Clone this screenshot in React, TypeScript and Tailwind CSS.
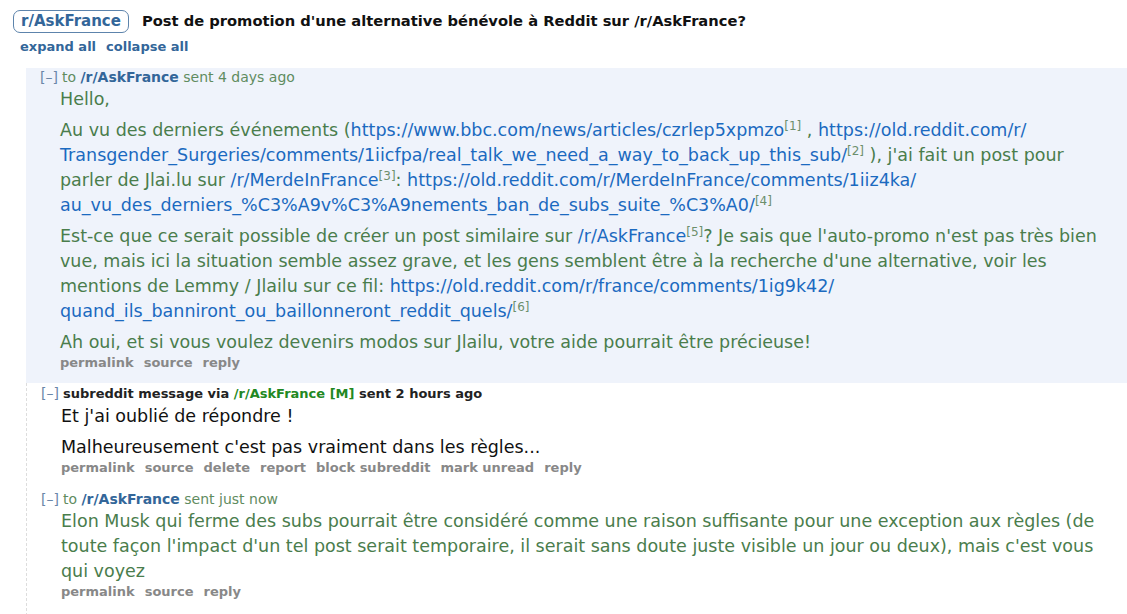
import React from "react";

const font = { fontFamily: '"DejaVu Sans", Verdana, sans-serif' };

function Ref({ n }: { n: number }) {
  return <span className="relative -top-[6px] text-[12px] leading-none text-[#6c8f6c]">[{n}]</span>;
}

function A({ children }: { children: React.ReactNode }) {
  return <a className="text-[#1b6ac0]">{children}</a>;
}

function Footer({ items }: { items: string[] }) {
  return (
    <ul className="flex gap-[10px] pl-5 text-[13px] font-bold text-[#888] leading-4">
      {items.map((i) => (
        <li key={i}>{i}</li>
      ))}
    </ul>
  );
}

function Toggle() {
  return <span className="text-[#6a87a8] mr-1">[–]</span>;
}

export default function App() {
  return (
    <div className="min-h-screen bg-white pt-[10px] pb-4" style={font}>
      <div className="flex items-center gap-[13px] pl-[13px]">
        <span className="h-[23px] flex items-center px-[7px] rounded-[7px] border border-[#5d84ac] text-[15px] font-bold text-[#336699]">
          r/AskFrance
        </span>
        <h1 className="text-[14.7px] font-bold text-[#111]">
          Post de promotion d'une alternative bénévole à Reddit sur /r/AskFrance?
        </h1>
      </div>
      <div className="flex gap-[10px] pl-5 mt-[6px] text-[13px] font-bold text-[#336699] leading-4">
        <span>expand all</span>
        <span>collapse all</span>
      </div>

      <div className="ml-[26px] mt-[13px] border-l border-dashed border-[#ddd]">
        {/* message 1 */}
        <div className="bg-[#eff3fb] pl-[14px] pr-6 pb-3 -ml-px">
          <div className="text-[14px] leading-4 pt-px text-[#5f8c5f]">
            <Toggle />
            to <span className="font-bold text-[#336699]">/r/AskFrance</span> sent 4 days ago
          </div>
          <div className="pl-5 pt-[2px] text-[17.5px] leading-[25px] text-[#4a7d4c] flex flex-col gap-[6px]">
            <p>Hello,</p>
            <p>
              Au vu des derniers événements (<A>https://www.bbc.com/news/articles/czrlep5xpmzo</A>
              <Ref n={1} /> , <A>https://old.reddit.com/r/<wbr />Transgender_Surgeries/comments/1iicfpa/real_talk_we_need_a_way_to_back_up_this_sub/</A>
              <Ref n={2} /> ), j'ai fait un post pour parler de Jlai.lu sur <A>/r/MerdeInFrance</A>
              <Ref n={3} />: <A>https://old.reddit.com/r/MerdeInFrance/comments/1iiz4ka/<wbr />au_vu_des_derniers_%C3%A9v%C3%A9nements_ban_de_subs_suite_%C3%A0/</A>
              <Ref n={4} />
            </p>
            <p>
              Est-ce que ce serait possible de créer un post similaire sur <A>/r/AskFrance</A>
              <Ref n={5} />? Je sais que l'auto-promo n'est pas très bien vue, mais ici la situation semble assez grave, et les gens semblent être à la recherche d'une alternative, voir les mentions de Lemmy / Jlailu sur ce fil:{" "}
              <A>https://old.reddit.com/r/france/comments/1ig9k42/<wbr />quand_ils_banniront_ou_baillonneront_reddit_quels/</A>
              <Ref n={6} />
            </p>
            <p>Ah oui, et si vous voulez devenirs modos sur Jlailu, votre aide pourrait être précieuse!</p>
          </div>
          <Footer items={["permalink", "source", "reply"]} />
        </div>

        {/* message 2 */}
        <div className="pl-[14px] pr-6 pt-[2px] pb-[13px]">
          <div className="text-[14px] leading-4">
            <Toggle />
            <span className="text-[13px] font-bold text-[#222]">
              subreddit message via <span className="text-[#228822]">/r/AskFrance</span>{" "}
              <span className="text-[#228822]">[M]</span> sent 2 hours ago
            </span>
          </div>
          <div className="pl-5 pt-[2px] text-[17.5px] leading-[25px] text-[#111] flex flex-col gap-[6px]">
            <p>Et j'ai oublié de répondre !</p>
            <p>Malheureusement c'est pas vraiment dans les règles...</p>
          </div>
          <Footer items={["permalink", "source", "delete", "report", "block subreddit", "mark unread", "reply"]} />
        </div>

        {/* message 3 */}
        <div className="pl-[14px] pr-6 pt-[2px] pb-4">
          <div className="text-[14px] leading-4 text-[#5f8c5f]">
            <Toggle />
            to <span className="font-bold text-[#336699]">/r/AskFrance</span> sent just now
          </div>
          <div className="pl-5 pt-[2px] text-[17.5px] leading-[25px] text-[#4a7d4c]">
            <p>
              Elon Musk qui ferme des subs pourrait être considéré comme une raison suffisante pour une exception aux règles (de toute façon l'impact d'un tel post serait temporaire, il serait sans doute juste visible un jour ou deux), mais c'est vous qui voyez
            </p>
          </div>
          <Footer items={["permalink", "source", "reply"]} />
        </div>
      </div>
    </div>
  );
}
